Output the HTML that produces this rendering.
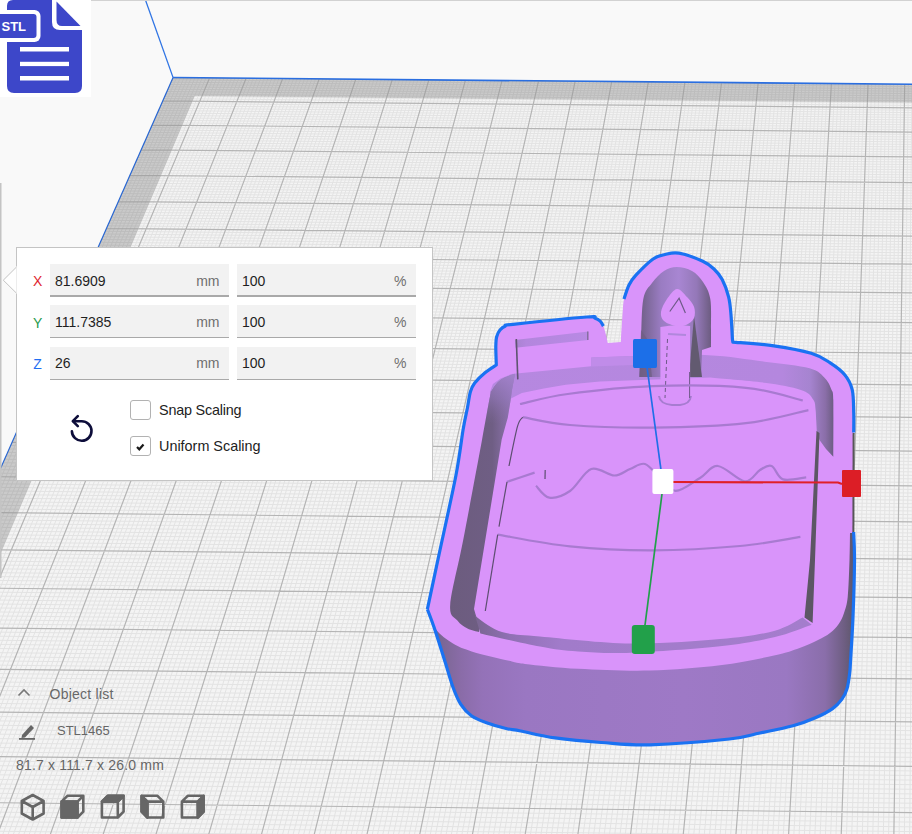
<!DOCTYPE html>
<html><head><meta charset="utf-8">
<style>
html,body{margin:0;padding:0;}
body{width:912px;height:834px;overflow:hidden;position:relative;background:#f9f9f9;font-family:"Liberation Sans",sans-serif;}
svg.scene{position:absolute;left:0;top:0;}
.panel{position:absolute;left:16px;top:247px;width:417px;height:234px;background:#fff;border:1px solid #c4c4c4;box-sizing:border-box;}
.fld{position:absolute;height:33px;background:#f2f2f2;border-bottom:1px solid #a9a9a9;box-sizing:border-box;}
.fld.f{border-bottom:2px solid #a9a9a9;}
.fld .v{position:absolute;left:5px;top:8.5px;font-size:14px;color:#1f1f1f;}
.fld .u{position:absolute;right:9.5px;top:8.5px;font-size:14px;color:#6f6f6f;}
.lbl{position:absolute;font-size:14px;}
.cb{position:absolute;left:113px;width:20.5px;height:20px;border:1.2px solid #b2b2b2;border-radius:3px;box-sizing:border-box;background:#fff;}
.cbt{position:absolute;left:142px;font-size:14.4px;color:#222;}
.txt{position:absolute;color:#666;}
</style></head><body>
<svg class="scene" width="912" height="834" viewBox="0 0 912 834">
<defs><clipPath id="pc"><path d="M173.07,77.53 L1161.35,86.50 L1279.85,966.75 L-212.09,950.09 Z"/></clipPath></defs>
<path d="M173.07,77.53 L1161.35,86.50 L1279.85,966.75 L-212.09,950.09 Z" fill="#f4f4f4"/>
<defs><clipPath id="bc"><path d="M173.07,77.53 L1161.35,86.50 L1163.82,104.87 L194.55,96.03 L-168.04,950.58 L-212.09,950.09 Z"/></clipPath><clipPath id="lc"><path d="M194.55,96.03 L1163.82,104.87 L1279.85,966.75 L-168.04,950.58 Z"/></clipPath></defs>
<path d="M173.07,77.53 L1161.35,86.50 L1163.82,104.87 L194.55,96.03 L-168.04,950.58 L-212.09,950.09 Z" fill="#cacaca"/>
<g clip-path="url(#lc)"><path d="M176.72,77.57L-206.58,950.15M180.37,77.60L-201.08,950.21M184.03,77.63L-195.57,950.27M187.68,77.66L-190.06,950.33M191.33,77.70L-184.56,950.39M194.98,77.73L-179.05,950.46M198.63,77.76L-173.54,950.52M202.29,77.80L-168.04,950.58M205.94,77.83L-162.53,950.64M213.24,77.90L-151.51,950.76M216.90,77.93L-146.01,950.83M220.55,77.96L-140.50,950.89M224.20,78.00L-134.99,950.95M227.85,78.03L-129.48,951.01M231.51,78.06L-123.97,951.07M235.16,78.10L-118.47,951.13M238.81,78.13L-112.96,951.19M242.46,78.16L-107.45,951.26M249.77,78.23L-96.43,951.38M253.42,78.26L-90.92,951.44M257.08,78.29L-85.41,951.50M260.73,78.33L-79.90,951.56M264.38,78.36L-74.39,951.63M268.04,78.39L-68.88,951.69M271.69,78.43L-63.37,951.75M275.34,78.46L-57.86,951.81M279.00,78.49L-52.35,951.87M286.30,78.56L-41.33,951.99M289.96,78.59L-35.82,952.06M293.61,78.63L-30.31,952.12M297.26,78.66L-24.80,952.18M300.92,78.69L-19.29,952.24M304.57,78.73L-13.78,952.30M308.23,78.76L-8.27,952.36M311.88,78.79L-2.75,952.43M315.53,78.83L2.76,952.49M322.84,78.89L13.78,952.61M326.50,78.92L19.29,952.67M330.15,78.96L24.81,952.73M333.81,78.99L30.32,952.80M337.46,79.02L35.83,952.86M341.11,79.06L41.34,952.92M344.77,79.09L46.86,952.98M348.42,79.12L52.37,953.04M352.08,79.16L57.88,953.10M359.39,79.22L68.91,953.23M363.04,79.26L74.42,953.29M366.70,79.29L79.94,953.35M370.35,79.32L85.45,953.41M374.01,79.36L90.96,953.47M377.66,79.39L96.48,953.53M381.32,79.42L101.99,953.60M384.97,79.46L107.51,953.66M388.63,79.49L113.02,953.72M395.94,79.55L124.05,953.84M399.60,79.59L129.57,953.90M403.25,79.62L135.08,953.97M406.91,79.65L140.60,954.03M410.56,79.69L146.11,954.09M414.22,79.72L151.63,954.15M417.88,79.75L157.14,954.21M421.53,79.79L162.66,954.27M425.19,79.82L168.17,954.34M432.50,79.89L179.21,954.46M436.16,79.92L184.72,954.52M439.81,79.95L190.24,954.58M443.47,79.99L195.76,954.64M447.12,80.02L201.27,954.71M450.78,80.05L206.79,954.77M454.44,80.09L212.31,954.83M458.09,80.12L217.82,954.89M461.75,80.15L223.34,954.95M469.06,80.22L234.38,955.07M472.72,80.25L239.90,955.14M476.38,80.28L245.41,955.20M480.04,80.32L250.93,955.26M483.69,80.35L256.45,955.32M487.35,80.38L261.97,955.38M491.01,80.42L267.49,955.44M494.66,80.45L273.01,955.51M498.32,80.48L278.52,955.57M505.64,80.55L289.56,955.69M509.29,80.58L295.08,955.75M512.95,80.62L300.60,955.81M516.61,80.65L306.12,955.88M520.27,80.68L311.64,955.94M523.92,80.72L317.16,956.00M527.58,80.75L322.68,956.06M531.24,80.78L328.20,956.12M534.90,80.82L333.72,956.18M542.21,80.88L344.76,956.31M545.87,80.92L350.28,956.37M549.53,80.95L355.80,956.43M553.19,80.98L361.33,956.49M556.85,81.02L366.85,956.55M560.50,81.05L372.37,956.62M564.16,81.08L377.89,956.68M567.82,81.11L383.41,956.74M571.48,81.15L388.93,956.80M578.80,81.21L399.98,956.92M582.46,81.25L405.50,956.99M586.12,81.28L411.02,957.05M589.77,81.31L416.54,957.11M593.43,81.35L422.07,957.17M597.09,81.38L427.59,957.23M600.75,81.41L433.11,957.30M604.41,81.45L438.64,957.36M608.07,81.48L444.16,957.42M615.39,81.55L455.21,957.54M619.05,81.58L460.73,957.60M622.71,81.61L466.25,957.67M626.37,81.65L471.78,957.73M630.03,81.68L477.30,957.79M633.69,81.71L482.83,957.85M637.35,81.75L488.35,957.91M641.01,81.78L493.88,957.97M644.67,81.81L499.40,958.04M651.99,81.88L510.45,958.16M655.65,81.91L515.98,958.22M659.31,81.95L521.50,958.28M662.97,81.98L527.03,958.34M666.63,82.01L532.55,958.41M670.29,82.04L538.08,958.47M673.95,82.08L543.60,958.53M677.61,82.11L549.13,958.59M681.27,82.14L554.66,958.65M688.59,82.21L565.71,958.78M692.25,82.24L571.24,958.84M695.91,82.28L576.76,958.90M699.57,82.31L582.29,958.96M703.23,82.34L587.82,959.02M706.89,82.38L593.34,959.09M710.55,82.41L598.87,959.15M714.21,82.44L604.40,959.21M717.88,82.48L609.93,959.27M725.20,82.54L620.98,959.39M728.86,82.58L626.51,959.46M732.52,82.61L632.04,959.52M736.18,82.64L637.57,959.58M739.84,82.68L643.09,959.64M743.51,82.71L648.62,959.70M747.17,82.74L654.15,959.76M750.83,82.78L659.68,959.83M754.49,82.81L665.21,959.89M761.81,82.88L676.27,960.01M765.48,82.91L681.80,960.07M769.14,82.94L687.33,960.14M772.80,82.98L692.86,960.20M776.46,83.01L698.39,960.26M780.13,83.04L703.92,960.32M783.79,83.08L709.45,960.38M787.45,83.11L714.98,960.44M791.11,83.14L720.51,960.51M798.44,83.21L731.57,960.63M802.10,83.24L737.10,960.69M805.76,83.27L742.63,960.75M809.43,83.31L748.16,960.81M813.09,83.34L753.70,960.88M816.75,83.37L759.23,960.94M820.41,83.41L764.76,961.00M824.08,83.44L770.29,961.06M827.74,83.47L775.82,961.12M835.07,83.54L786.89,961.25M838.73,83.57L792.42,961.31M842.39,83.61L797.95,961.37M846.06,83.64L803.49,961.43M849.72,83.67L809.02,961.49M853.38,83.71L814.55,961.56M857.05,83.74L820.08,961.62M860.71,83.77L825.62,961.68M864.37,83.81L831.15,961.74M871.70,83.87L842.22,961.87M875.37,83.91L847.75,961.93M879.03,83.94L853.29,961.99M882.69,83.97L858.82,962.05M886.36,84.01L864.36,962.11M890.02,84.04L869.89,962.17M893.69,84.07L875.42,962.24M897.35,84.11L880.96,962.30M901.01,84.14L886.49,962.36M908.34,84.21L897.57,962.48M912.01,84.24L903.10,962.55M915.67,84.27L908.64,962.61M919.34,84.31L914.17,962.67M923.00,84.34L919.71,962.73M926.67,84.37L925.24,962.79M930.33,84.41L930.78,962.85M934.00,84.44L936.32,962.92M937.66,84.47L941.85,962.98M944.99,84.54L952.93,963.10M948.66,84.57L958.46,963.16M952.32,84.60L964.00,963.23M955.99,84.64L969.54,963.29M959.65,84.67L975.07,963.35M963.32,84.70L980.61,963.41M966.98,84.74L986.15,963.47M970.65,84.77L991.69,963.54M974.31,84.80L997.22,963.60M981.65,84.87L1008.30,963.72M985.31,84.90L1013.84,963.78M988.98,84.94L1019.38,963.84M992.64,84.97L1024.92,963.91M996.31,85.00L1030.45,963.97M999.98,85.04L1035.99,964.03M1003.64,85.07L1041.53,964.09M1007.31,85.10L1047.07,964.15M1010.97,85.14L1052.61,964.22M1018.31,85.20L1063.69,964.34M1021.97,85.24L1069.23,964.40M1025.64,85.27L1074.77,964.46M1029.31,85.30L1080.31,964.53M1032.97,85.34L1085.85,964.59M1036.64,85.37L1091.39,964.65M1040.31,85.40L1096.93,964.71M1043.97,85.44L1102.47,964.77M1047.64,85.47L1108.01,964.83M1054.97,85.54L1119.09,964.96M1058.64,85.57L1124.64,965.02M1062.31,85.60L1130.18,965.08M1065.98,85.64L1135.72,965.14M1069.64,85.67L1141.26,965.21M1073.31,85.70L1146.80,965.27M1076.98,85.74L1152.34,965.33M1080.65,85.77L1157.89,965.39M1084.31,85.80L1163.43,965.45M1091.65,85.87L1174.51,965.58M1095.32,85.90L1180.06,965.64M1098.98,85.94L1185.60,965.70M1102.65,85.97L1191.14,965.76M1106.32,86.00L1196.69,965.83M1109.99,86.04L1202.23,965.89M1113.66,86.07L1207.77,965.95M1117.32,86.10L1213.32,966.01M1120.99,86.14L1218.86,966.07M1128.33,86.20L1229.95,966.20M1132.00,86.24L1235.49,966.26M1135.67,86.27L1241.04,966.32M1139.33,86.30L1246.58,966.38M1143.00,86.34L1252.13,966.44M1146.67,86.37L1257.67,966.51M1150.34,86.40L1263.21,966.57M1154.01,86.44L1268.76,966.63M1157.68,86.47L1274.31,966.69M172.05,79.85L1161.66,88.84M171.02,82.17L1161.98,91.18M170.00,84.50L1162.29,93.52M168.97,86.83L1162.61,95.87M167.93,89.17L1162.93,98.23M166.90,91.52L1163.24,100.60M165.86,93.87L1163.56,102.97M164.82,96.23L1163.88,105.35M163.77,98.60L1164.20,107.73M161.67,103.35L1164.85,112.52M160.62,105.74L1165.17,114.93M159.56,108.13L1165.50,117.34M158.50,110.53L1165.82,119.75M157.44,112.94L1166.15,122.18M156.38,115.35L1166.48,124.61M155.31,117.77L1166.80,127.05M154.24,120.20L1167.13,129.49M153.17,122.63L1167.46,131.94M151.01,127.51L1168.13,136.87M149.93,129.97L1168.46,139.34M148.84,132.43L1168.79,141.82M147.75,134.89L1169.13,144.30M146.66,137.37L1169.46,146.80M145.56,139.85L1169.80,149.30M144.47,142.33L1170.14,151.80M143.37,144.83L1170.48,154.32M142.26,147.33L1170.82,156.84M140.04,152.35L1171.50,161.90M138.93,154.88L1171.84,164.44M137.81,157.41L1172.18,166.99M136.69,159.94L1172.53,169.55M135.57,162.49L1172.87,172.11M134.44,165.04L1173.22,174.68M133.32,167.60L1173.56,177.26M132.18,170.16L1173.91,179.85M131.05,172.73L1174.26,182.44M128.77,177.90L1174.96,187.65M127.62,180.50L1175.32,190.27M126.47,183.10L1175.67,192.89M125.32,185.71L1176.02,195.52M124.16,188.33L1176.38,198.16M123.01,190.95L1176.73,200.80M121.84,193.59L1177.09,203.46M120.68,196.23L1177.45,206.12M119.51,198.87L1177.81,208.79M117.16,204.19L1178.53,214.15M115.98,206.86L1178.89,216.84M114.80,209.54L1179.26,219.54M113.61,212.23L1179.62,222.25M112.42,214.92L1179.99,224.97M111.23,217.63L1180.35,227.69M110.04,220.34L1180.72,230.42M108.84,223.05L1181.09,233.16M107.63,225.78L1181.46,235.91M105.21,231.26L1182.20,241.43M104.00,234.01L1182.58,244.20M102.78,236.77L1182.95,246.98M101.56,239.53L1183.33,249.77M100.34,242.31L1183.70,252.57M99.11,245.09L1184.08,255.37M97.88,247.88L1184.46,258.19M96.64,250.68L1184.84,261.01M95.40,253.49L1185.22,263.84M92.91,259.13L1185.99,269.53M91.66,261.96L1186.37,272.38M90.41,264.80L1186.76,275.25M89.15,267.65L1187.14,278.12M87.89,270.51L1187.53,281.00M86.62,273.38L1187.92,283.89M85.35,276.25L1188.31,286.79M84.08,279.14L1188.70,289.70M82.80,282.03L1189.09,292.62M80.24,287.84L1189.88,298.48M78.95,290.76L1190.28,301.42M77.65,293.69L1190.68,304.37M76.36,296.63L1191.08,307.33M75.06,299.58L1191.48,310.30M73.75,302.53L1191.88,313.28M72.44,305.50L1192.28,316.27M71.13,308.47L1192.68,319.27M69.82,311.45L1193.09,322.28M67.17,317.44L1193.90,328.32M65.84,320.45L1194.31,331.35M64.51,323.47L1194.72,334.40M63.17,326.50L1195.13,337.45M61.83,329.54L1195.54,340.52M60.49,332.59L1195.96,343.59M59.14,335.65L1196.37,346.67M57.78,338.71L1196.79,349.76M56.42,341.79L1197.21,352.87M53.70,347.97L1198.04,359.10M52.33,351.07L1198.47,362.23M50.95,354.19L1198.89,365.37M49.57,357.31L1199.31,368.52M48.19,360.45L1199.74,371.68M46.80,363.59L1200.17,374.85M45.41,366.75L1200.59,378.03M44.01,369.91L1201.02,381.22M42.61,373.08L1201.45,384.42M39.79,379.46L1202.32,390.86M38.38,382.67L1202.76,394.09M36.96,385.88L1203.19,397.33M35.54,389.11L1203.63,400.58M34.11,392.34L1204.07,403.85M32.68,395.59L1204.51,407.12M31.24,398.84L1204.95,410.40M29.80,402.11L1205.39,413.70M28.35,405.39L1205.84,417.00M25.44,411.97L1206.73,423.64M23.98,415.28L1207.18,426.98M22.52,418.60L1207.63,430.33M21.05,421.93L1208.09,433.69M19.57,425.27L1208.54,437.06M18.09,428.62L1208.99,440.44M16.61,431.99L1209.45,443.83M15.12,435.36L1209.91,447.23M13.63,438.75L1210.37,450.65M10.62,445.55L1211.29,457.51M9.11,448.97L1211.76,460.95M7.60,452.40L1212.22,464.41M6.08,455.84L1212.69,467.88M4.56,459.29L1213.16,471.37M3.03,462.75L1213.63,474.86M1.49,466.23L1214.10,478.37M-0.04,469.71L1214.57,481.88M-1.59,473.21L1215.05,485.41M-4.69,480.24L1216.00,492.50M-6.25,483.78L1216.48,496.07M-7.82,487.32L1216.97,499.64M-9.39,490.88L1217.45,503.23M-10.96,494.45L1217.93,506.83M-12.54,498.03L1218.42,510.44M-14.13,501.62L1218.91,514.07M-15.72,505.23L1219.40,517.71M-17.32,508.84L1219.89,521.35M-20.53,516.12L1220.88,528.69M-22.14,519.77L1221.37,532.38M-23.76,523.44L1221.87,536.08M-25.38,527.12L1222.37,539.79M-27.01,530.81L1222.87,543.51M-28.65,534.51L1223.37,547.25M-30.29,538.23L1223.88,551.00M-31.93,541.96L1224.39,554.76M-33.59,545.70L1224.89,558.54M-36.91,553.22L1225.92,566.13M-38.58,557.01L1226.43,569.94M-40.25,560.80L1226.95,573.77M-41.93,564.61L1227.46,577.61M-43.62,568.43L1227.98,581.47M-45.31,572.26L1228.50,585.34M-47.01,576.11L1229.02,589.22M-48.71,579.97L1229.55,593.11M-50.42,583.85L1230.08,597.02M-53.86,591.63L1231.13,604.88M-55.59,595.55L1231.67,608.83M-57.33,599.48L1232.20,612.80M-59.07,603.42L1232.73,616.78M-60.81,607.38L1233.27,620.77M-62.56,611.35L1233.81,624.78M-64.32,615.33L1234.35,628.80M-66.09,619.33L1234.90,632.83M-67.86,623.35L1235.44,636.88M-71.42,631.42L1236.54,645.03M-73.21,635.47L1237.09,649.12M-75.01,639.54L1237.64,653.23M-76.81,643.63L1238.20,657.35M-78.62,647.73L1238.75,661.49M-80.44,651.85L1239.31,665.64M-82.26,655.98L1239.87,669.81M-84.09,660.12L1240.44,674.00M-85.93,664.28L1241.00,678.19M-89.62,672.65L1242.14,686.64M-91.48,676.85L1242.71,690.88M-93.34,681.07L1243.28,695.14M-95.21,685.31L1243.86,699.42M-97.09,689.56L1244.44,703.71M-98.97,693.83L1245.02,708.02M-100.86,698.11L1245.60,712.34M-102.76,702.41L1246.18,716.68M-104.67,706.73L1246.77,721.03M-108.50,715.40L1247.95,729.79M-110.42,719.77L1248.54,734.20M-112.35,724.15L1249.14,738.62M-114.29,728.54L1249.73,743.05M-116.24,732.95L1250.33,747.51M-118.20,737.38L1250.94,751.98M-120.16,741.83L1251.54,756.46M-122.13,746.29L1252.15,760.97M-124.11,750.77L1252.75,765.49M-128.08,759.77L1253.98,774.58M-130.08,764.30L1254.59,779.15M-132.09,768.85L1255.21,783.74M-134.10,773.41L1255.83,788.35M-136.12,777.99L1256.46,792.97M-138.15,782.59L1257.08,797.62M-140.19,787.21L1257.71,802.28M-142.24,791.84L1258.34,806.96M-144.29,796.49L1258.97,811.65M-148.42,805.85L1260.24,821.10M-150.50,810.56L1260.88,825.85M-152.58,815.28L1261.52,830.62M-154.68,820.02L1262.17,835.41M-156.78,824.78L1262.81,840.21M-158.89,829.56L1263.46,845.04M-161.00,834.36L1264.12,849.88M-163.13,839.17L1264.77,854.74M-165.26,844.01L1265.43,859.63M-169.56,853.73L1266.75,869.45M-171.72,858.63L1267.42,874.39M-173.88,863.54L1268.08,879.35M-176.06,868.47L1268.75,884.32M-178.25,873.42L1269.43,889.32M-180.44,878.39L1270.10,894.34M-182.64,883.38L1270.78,899.38M-184.85,888.39L1271.46,904.44M-187.07,893.41L1272.14,909.52M-191.54,903.53L1273.52,919.74M-193.79,908.62L1274.21,924.88M-196.04,913.73L1274.91,930.04M-198.31,918.86L1275.61,935.22M-200.58,924.02L1276.31,940.42M-202.86,929.19L1277.01,945.65M-205.16,934.38L1277.71,950.89M-207.46,939.59L1278.42,956.16M-209.77,944.83L1279.14,961.45" stroke="#e3e3e3" stroke-width="1" fill="none"/></g>
<g clip-path="url(#bc)"><path d="M176.72,77.57L-206.58,950.15M180.37,77.60L-201.08,950.21M184.03,77.63L-195.57,950.27M187.68,77.66L-190.06,950.33M191.33,77.70L-184.56,950.39M194.98,77.73L-179.05,950.46M198.63,77.76L-173.54,950.52M202.29,77.80L-168.04,950.58M205.94,77.83L-162.53,950.64M213.24,77.90L-151.51,950.76M216.90,77.93L-146.01,950.83M220.55,77.96L-140.50,950.89M224.20,78.00L-134.99,950.95M227.85,78.03L-129.48,951.01M231.51,78.06L-123.97,951.07M235.16,78.10L-118.47,951.13M238.81,78.13L-112.96,951.19M242.46,78.16L-107.45,951.26M249.77,78.23L-96.43,951.38M253.42,78.26L-90.92,951.44M257.08,78.29L-85.41,951.50M260.73,78.33L-79.90,951.56M264.38,78.36L-74.39,951.63M268.04,78.39L-68.88,951.69M271.69,78.43L-63.37,951.75M275.34,78.46L-57.86,951.81M279.00,78.49L-52.35,951.87M286.30,78.56L-41.33,951.99M289.96,78.59L-35.82,952.06M293.61,78.63L-30.31,952.12M297.26,78.66L-24.80,952.18M300.92,78.69L-19.29,952.24M304.57,78.73L-13.78,952.30M308.23,78.76L-8.27,952.36M311.88,78.79L-2.75,952.43M315.53,78.83L2.76,952.49M322.84,78.89L13.78,952.61M326.50,78.92L19.29,952.67M330.15,78.96L24.81,952.73M333.81,78.99L30.32,952.80M337.46,79.02L35.83,952.86M341.11,79.06L41.34,952.92M344.77,79.09L46.86,952.98M348.42,79.12L52.37,953.04M352.08,79.16L57.88,953.10M359.39,79.22L68.91,953.23M363.04,79.26L74.42,953.29M366.70,79.29L79.94,953.35M370.35,79.32L85.45,953.41M374.01,79.36L90.96,953.47M377.66,79.39L96.48,953.53M381.32,79.42L101.99,953.60M384.97,79.46L107.51,953.66M388.63,79.49L113.02,953.72M395.94,79.55L124.05,953.84M399.60,79.59L129.57,953.90M403.25,79.62L135.08,953.97M406.91,79.65L140.60,954.03M410.56,79.69L146.11,954.09M414.22,79.72L151.63,954.15M417.88,79.75L157.14,954.21M421.53,79.79L162.66,954.27M425.19,79.82L168.17,954.34M432.50,79.89L179.21,954.46M436.16,79.92L184.72,954.52M439.81,79.95L190.24,954.58M443.47,79.99L195.76,954.64M447.12,80.02L201.27,954.71M450.78,80.05L206.79,954.77M454.44,80.09L212.31,954.83M458.09,80.12L217.82,954.89M461.75,80.15L223.34,954.95M469.06,80.22L234.38,955.07M472.72,80.25L239.90,955.14M476.38,80.28L245.41,955.20M480.04,80.32L250.93,955.26M483.69,80.35L256.45,955.32M487.35,80.38L261.97,955.38M491.01,80.42L267.49,955.44M494.66,80.45L273.01,955.51M498.32,80.48L278.52,955.57M505.64,80.55L289.56,955.69M509.29,80.58L295.08,955.75M512.95,80.62L300.60,955.81M516.61,80.65L306.12,955.88M520.27,80.68L311.64,955.94M523.92,80.72L317.16,956.00M527.58,80.75L322.68,956.06M531.24,80.78L328.20,956.12M534.90,80.82L333.72,956.18M542.21,80.88L344.76,956.31M545.87,80.92L350.28,956.37M549.53,80.95L355.80,956.43M553.19,80.98L361.33,956.49M556.85,81.02L366.85,956.55M560.50,81.05L372.37,956.62M564.16,81.08L377.89,956.68M567.82,81.11L383.41,956.74M571.48,81.15L388.93,956.80M578.80,81.21L399.98,956.92M582.46,81.25L405.50,956.99M586.12,81.28L411.02,957.05M589.77,81.31L416.54,957.11M593.43,81.35L422.07,957.17M597.09,81.38L427.59,957.23M600.75,81.41L433.11,957.30M604.41,81.45L438.64,957.36M608.07,81.48L444.16,957.42M615.39,81.55L455.21,957.54M619.05,81.58L460.73,957.60M622.71,81.61L466.25,957.67M626.37,81.65L471.78,957.73M630.03,81.68L477.30,957.79M633.69,81.71L482.83,957.85M637.35,81.75L488.35,957.91M641.01,81.78L493.88,957.97M644.67,81.81L499.40,958.04M651.99,81.88L510.45,958.16M655.65,81.91L515.98,958.22M659.31,81.95L521.50,958.28M662.97,81.98L527.03,958.34M666.63,82.01L532.55,958.41M670.29,82.04L538.08,958.47M673.95,82.08L543.60,958.53M677.61,82.11L549.13,958.59M681.27,82.14L554.66,958.65M688.59,82.21L565.71,958.78M692.25,82.24L571.24,958.84M695.91,82.28L576.76,958.90M699.57,82.31L582.29,958.96M703.23,82.34L587.82,959.02M706.89,82.38L593.34,959.09M710.55,82.41L598.87,959.15M714.21,82.44L604.40,959.21M717.88,82.48L609.93,959.27M725.20,82.54L620.98,959.39M728.86,82.58L626.51,959.46M732.52,82.61L632.04,959.52M736.18,82.64L637.57,959.58M739.84,82.68L643.09,959.64M743.51,82.71L648.62,959.70M747.17,82.74L654.15,959.76M750.83,82.78L659.68,959.83M754.49,82.81L665.21,959.89M761.81,82.88L676.27,960.01M765.48,82.91L681.80,960.07M769.14,82.94L687.33,960.14M772.80,82.98L692.86,960.20M776.46,83.01L698.39,960.26M780.13,83.04L703.92,960.32M783.79,83.08L709.45,960.38M787.45,83.11L714.98,960.44M791.11,83.14L720.51,960.51M798.44,83.21L731.57,960.63M802.10,83.24L737.10,960.69M805.76,83.27L742.63,960.75M809.43,83.31L748.16,960.81M813.09,83.34L753.70,960.88M816.75,83.37L759.23,960.94M820.41,83.41L764.76,961.00M824.08,83.44L770.29,961.06M827.74,83.47L775.82,961.12M835.07,83.54L786.89,961.25M838.73,83.57L792.42,961.31M842.39,83.61L797.95,961.37M846.06,83.64L803.49,961.43M849.72,83.67L809.02,961.49M853.38,83.71L814.55,961.56M857.05,83.74L820.08,961.62M860.71,83.77L825.62,961.68M864.37,83.81L831.15,961.74M871.70,83.87L842.22,961.87M875.37,83.91L847.75,961.93M879.03,83.94L853.29,961.99M882.69,83.97L858.82,962.05M886.36,84.01L864.36,962.11M890.02,84.04L869.89,962.17M893.69,84.07L875.42,962.24M897.35,84.11L880.96,962.30M901.01,84.14L886.49,962.36M908.34,84.21L897.57,962.48M912.01,84.24L903.10,962.55M915.67,84.27L908.64,962.61M919.34,84.31L914.17,962.67M923.00,84.34L919.71,962.73M926.67,84.37L925.24,962.79M930.33,84.41L930.78,962.85M934.00,84.44L936.32,962.92M937.66,84.47L941.85,962.98M944.99,84.54L952.93,963.10M948.66,84.57L958.46,963.16M952.32,84.60L964.00,963.23M955.99,84.64L969.54,963.29M959.65,84.67L975.07,963.35M963.32,84.70L980.61,963.41M966.98,84.74L986.15,963.47M970.65,84.77L991.69,963.54M974.31,84.80L997.22,963.60M981.65,84.87L1008.30,963.72M985.31,84.90L1013.84,963.78M988.98,84.94L1019.38,963.84M992.64,84.97L1024.92,963.91M996.31,85.00L1030.45,963.97M999.98,85.04L1035.99,964.03M1003.64,85.07L1041.53,964.09M1007.31,85.10L1047.07,964.15M1010.97,85.14L1052.61,964.22M1018.31,85.20L1063.69,964.34M1021.97,85.24L1069.23,964.40M1025.64,85.27L1074.77,964.46M1029.31,85.30L1080.31,964.53M1032.97,85.34L1085.85,964.59M1036.64,85.37L1091.39,964.65M1040.31,85.40L1096.93,964.71M1043.97,85.44L1102.47,964.77M1047.64,85.47L1108.01,964.83M1054.97,85.54L1119.09,964.96M1058.64,85.57L1124.64,965.02M1062.31,85.60L1130.18,965.08M1065.98,85.64L1135.72,965.14M1069.64,85.67L1141.26,965.21M1073.31,85.70L1146.80,965.27M1076.98,85.74L1152.34,965.33M1080.65,85.77L1157.89,965.39M1084.31,85.80L1163.43,965.45M1091.65,85.87L1174.51,965.58M1095.32,85.90L1180.06,965.64M1098.98,85.94L1185.60,965.70M1102.65,85.97L1191.14,965.76M1106.32,86.00L1196.69,965.83M1109.99,86.04L1202.23,965.89M1113.66,86.07L1207.77,965.95M1117.32,86.10L1213.32,966.01M1120.99,86.14L1218.86,966.07M1128.33,86.20L1229.95,966.20M1132.00,86.24L1235.49,966.26M1135.67,86.27L1241.04,966.32M1139.33,86.30L1246.58,966.38M1143.00,86.34L1252.13,966.44M1146.67,86.37L1257.67,966.51M1150.34,86.40L1263.21,966.57M1154.01,86.44L1268.76,966.63M1157.68,86.47L1274.31,966.69M172.05,79.85L1161.66,88.84M171.02,82.17L1161.98,91.18M170.00,84.50L1162.29,93.52M168.97,86.83L1162.61,95.87M167.93,89.17L1162.93,98.23M166.90,91.52L1163.24,100.60M165.86,93.87L1163.56,102.97M164.82,96.23L1163.88,105.35M163.77,98.60L1164.20,107.73M161.67,103.35L1164.85,112.52M160.62,105.74L1165.17,114.93M159.56,108.13L1165.50,117.34M158.50,110.53L1165.82,119.75M157.44,112.94L1166.15,122.18M156.38,115.35L1166.48,124.61M155.31,117.77L1166.80,127.05M154.24,120.20L1167.13,129.49M153.17,122.63L1167.46,131.94M151.01,127.51L1168.13,136.87M149.93,129.97L1168.46,139.34M148.84,132.43L1168.79,141.82M147.75,134.89L1169.13,144.30M146.66,137.37L1169.46,146.80M145.56,139.85L1169.80,149.30M144.47,142.33L1170.14,151.80M143.37,144.83L1170.48,154.32M142.26,147.33L1170.82,156.84M140.04,152.35L1171.50,161.90M138.93,154.88L1171.84,164.44M137.81,157.41L1172.18,166.99M136.69,159.94L1172.53,169.55M135.57,162.49L1172.87,172.11M134.44,165.04L1173.22,174.68M133.32,167.60L1173.56,177.26M132.18,170.16L1173.91,179.85M131.05,172.73L1174.26,182.44M128.77,177.90L1174.96,187.65M127.62,180.50L1175.32,190.27M126.47,183.10L1175.67,192.89M125.32,185.71L1176.02,195.52M124.16,188.33L1176.38,198.16M123.01,190.95L1176.73,200.80M121.84,193.59L1177.09,203.46M120.68,196.23L1177.45,206.12M119.51,198.87L1177.81,208.79M117.16,204.19L1178.53,214.15M115.98,206.86L1178.89,216.84M114.80,209.54L1179.26,219.54M113.61,212.23L1179.62,222.25M112.42,214.92L1179.99,224.97M111.23,217.63L1180.35,227.69M110.04,220.34L1180.72,230.42M108.84,223.05L1181.09,233.16M107.63,225.78L1181.46,235.91M105.21,231.26L1182.20,241.43M104.00,234.01L1182.58,244.20M102.78,236.77L1182.95,246.98M101.56,239.53L1183.33,249.77M100.34,242.31L1183.70,252.57M99.11,245.09L1184.08,255.37M97.88,247.88L1184.46,258.19M96.64,250.68L1184.84,261.01M95.40,253.49L1185.22,263.84M92.91,259.13L1185.99,269.53M91.66,261.96L1186.37,272.38M90.41,264.80L1186.76,275.25M89.15,267.65L1187.14,278.12M87.89,270.51L1187.53,281.00M86.62,273.38L1187.92,283.89M85.35,276.25L1188.31,286.79M84.08,279.14L1188.70,289.70M82.80,282.03L1189.09,292.62M80.24,287.84L1189.88,298.48M78.95,290.76L1190.28,301.42M77.65,293.69L1190.68,304.37M76.36,296.63L1191.08,307.33M75.06,299.58L1191.48,310.30M73.75,302.53L1191.88,313.28M72.44,305.50L1192.28,316.27M71.13,308.47L1192.68,319.27M69.82,311.45L1193.09,322.28M67.17,317.44L1193.90,328.32M65.84,320.45L1194.31,331.35M64.51,323.47L1194.72,334.40M63.17,326.50L1195.13,337.45M61.83,329.54L1195.54,340.52M60.49,332.59L1195.96,343.59M59.14,335.65L1196.37,346.67M57.78,338.71L1196.79,349.76M56.42,341.79L1197.21,352.87M53.70,347.97L1198.04,359.10M52.33,351.07L1198.47,362.23M50.95,354.19L1198.89,365.37M49.57,357.31L1199.31,368.52M48.19,360.45L1199.74,371.68M46.80,363.59L1200.17,374.85M45.41,366.75L1200.59,378.03M44.01,369.91L1201.02,381.22M42.61,373.08L1201.45,384.42M39.79,379.46L1202.32,390.86M38.38,382.67L1202.76,394.09M36.96,385.88L1203.19,397.33M35.54,389.11L1203.63,400.58M34.11,392.34L1204.07,403.85M32.68,395.59L1204.51,407.12M31.24,398.84L1204.95,410.40M29.80,402.11L1205.39,413.70M28.35,405.39L1205.84,417.00M25.44,411.97L1206.73,423.64M23.98,415.28L1207.18,426.98M22.52,418.60L1207.63,430.33M21.05,421.93L1208.09,433.69M19.57,425.27L1208.54,437.06M18.09,428.62L1208.99,440.44M16.61,431.99L1209.45,443.83M15.12,435.36L1209.91,447.23M13.63,438.75L1210.37,450.65M10.62,445.55L1211.29,457.51M9.11,448.97L1211.76,460.95M7.60,452.40L1212.22,464.41M6.08,455.84L1212.69,467.88M4.56,459.29L1213.16,471.37M3.03,462.75L1213.63,474.86M1.49,466.23L1214.10,478.37M-0.04,469.71L1214.57,481.88M-1.59,473.21L1215.05,485.41M-4.69,480.24L1216.00,492.50M-6.25,483.78L1216.48,496.07M-7.82,487.32L1216.97,499.64M-9.39,490.88L1217.45,503.23M-10.96,494.45L1217.93,506.83M-12.54,498.03L1218.42,510.44M-14.13,501.62L1218.91,514.07M-15.72,505.23L1219.40,517.71M-17.32,508.84L1219.89,521.35M-20.53,516.12L1220.88,528.69M-22.14,519.77L1221.37,532.38M-23.76,523.44L1221.87,536.08M-25.38,527.12L1222.37,539.79M-27.01,530.81L1222.87,543.51M-28.65,534.51L1223.37,547.25M-30.29,538.23L1223.88,551.00M-31.93,541.96L1224.39,554.76M-33.59,545.70L1224.89,558.54M-36.91,553.22L1225.92,566.13M-38.58,557.01L1226.43,569.94M-40.25,560.80L1226.95,573.77M-41.93,564.61L1227.46,577.61M-43.62,568.43L1227.98,581.47M-45.31,572.26L1228.50,585.34M-47.01,576.11L1229.02,589.22M-48.71,579.97L1229.55,593.11M-50.42,583.85L1230.08,597.02M-53.86,591.63L1231.13,604.88M-55.59,595.55L1231.67,608.83M-57.33,599.48L1232.20,612.80M-59.07,603.42L1232.73,616.78M-60.81,607.38L1233.27,620.77M-62.56,611.35L1233.81,624.78M-64.32,615.33L1234.35,628.80M-66.09,619.33L1234.90,632.83M-67.86,623.35L1235.44,636.88M-71.42,631.42L1236.54,645.03M-73.21,635.47L1237.09,649.12M-75.01,639.54L1237.64,653.23M-76.81,643.63L1238.20,657.35M-78.62,647.73L1238.75,661.49M-80.44,651.85L1239.31,665.64M-82.26,655.98L1239.87,669.81M-84.09,660.12L1240.44,674.00M-85.93,664.28L1241.00,678.19M-89.62,672.65L1242.14,686.64M-91.48,676.85L1242.71,690.88M-93.34,681.07L1243.28,695.14M-95.21,685.31L1243.86,699.42M-97.09,689.56L1244.44,703.71M-98.97,693.83L1245.02,708.02M-100.86,698.11L1245.60,712.34M-102.76,702.41L1246.18,716.68M-104.67,706.73L1246.77,721.03M-108.50,715.40L1247.95,729.79M-110.42,719.77L1248.54,734.20M-112.35,724.15L1249.14,738.62M-114.29,728.54L1249.73,743.05M-116.24,732.95L1250.33,747.51M-118.20,737.38L1250.94,751.98M-120.16,741.83L1251.54,756.46M-122.13,746.29L1252.15,760.97M-124.11,750.77L1252.75,765.49M-128.08,759.77L1253.98,774.58M-130.08,764.30L1254.59,779.15M-132.09,768.85L1255.21,783.74M-134.10,773.41L1255.83,788.35M-136.12,777.99L1256.46,792.97M-138.15,782.59L1257.08,797.62M-140.19,787.21L1257.71,802.28M-142.24,791.84L1258.34,806.96M-144.29,796.49L1258.97,811.65M-148.42,805.85L1260.24,821.10M-150.50,810.56L1260.88,825.85M-152.58,815.28L1261.52,830.62M-154.68,820.02L1262.17,835.41M-156.78,824.78L1262.81,840.21M-158.89,829.56L1263.46,845.04M-161.00,834.36L1264.12,849.88M-163.13,839.17L1264.77,854.74M-165.26,844.01L1265.43,859.63M-169.56,853.73L1266.75,869.45M-171.72,858.63L1267.42,874.39M-173.88,863.54L1268.08,879.35M-176.06,868.47L1268.75,884.32M-178.25,873.42L1269.43,889.32M-180.44,878.39L1270.10,894.34M-182.64,883.38L1270.78,899.38M-184.85,888.39L1271.46,904.44M-187.07,893.41L1272.14,909.52M-191.54,903.53L1273.52,919.74M-193.79,908.62L1274.21,924.88M-196.04,913.73L1274.91,930.04M-198.31,918.86L1275.61,935.22M-200.58,924.02L1276.31,940.42M-202.86,929.19L1277.01,945.65M-205.16,934.38L1277.71,950.89M-207.46,939.59L1278.42,956.16M-209.77,944.83L1279.14,961.45" stroke="#bdbdbd" stroke-width="1" fill="none"/></g>
<g clip-path="url(#lc)"><path d="M173.07,77.53L-212.09,950.09M209.59,77.86L-157.02,950.70M246.12,78.20L-101.94,951.32M282.65,78.53L-46.84,951.93M319.19,78.86L8.27,952.55M355.73,79.19L63.39,953.16M392.29,79.52L118.54,953.78M428.84,79.85L173.69,954.40M465.41,80.19L228.86,955.01M501.98,80.52L284.04,955.63M538.56,80.85L339.24,956.25M575.14,81.18L394.46,956.86M611.73,81.51L449.68,957.48M648.33,81.85L504.93,958.10M684.93,82.18L560.18,958.71M721.54,82.51L615.45,959.33M758.15,82.84L670.74,959.95M794.77,83.17L726.04,960.57M831.40,83.51L781.36,961.19M868.04,83.84L836.69,961.80M904.68,84.17L892.03,962.42M941.33,84.51L947.39,963.04M977.98,84.84L1002.76,963.66M1014.64,85.17L1058.15,964.28M1051.31,85.50L1113.55,964.90M1087.98,85.84L1168.97,965.52M1124.66,86.17L1224.40,966.14M1161.35,86.50L1279.85,966.75M173.07,77.53L1161.35,86.50M162.72,100.97L1164.53,110.12M152.09,125.07L1167.79,134.40M141.15,149.84L1171.16,159.37M129.91,175.32L1174.61,185.04M118.34,201.53L1178.17,211.46M106.43,228.51L1181.83,238.66M94.16,256.30L1185.60,266.68M81.52,284.93L1189.49,295.54M68.49,314.44L1193.49,325.29M55.06,344.87L1197.62,355.98M41.20,376.27L1201.89,387.64M26.90,408.67L1206.29,420.32M12.13,442.14L1210.83,454.07M-3.14,476.72L1215.53,488.95M-18.92,512.47L1220.38,525.02M-35.24,549.46L1225.40,562.33M-52.14,587.73L1230.60,600.95M-69.64,627.38L1235.99,640.95M-87.77,668.46L1241.57,682.41M-106.58,711.06L1247.36,725.40M-126.09,755.26L1253.37,770.03M-146.35,801.16L1259.60,816.37M-167.41,848.86L1266.09,864.53M-189.30,898.46L1272.83,914.62M-212.09,950.09L1279.85,966.75" stroke="#b4b4b4" stroke-width="1.2" fill="none"/></g>
<g clip-path="url(#bc)"><path d="M173.07,77.53L-212.09,950.09M209.59,77.86L-157.02,950.70M246.12,78.20L-101.94,951.32M282.65,78.53L-46.84,951.93M319.19,78.86L8.27,952.55M355.73,79.19L63.39,953.16M392.29,79.52L118.54,953.78M428.84,79.85L173.69,954.40M465.41,80.19L228.86,955.01M501.98,80.52L284.04,955.63M538.56,80.85L339.24,956.25M575.14,81.18L394.46,956.86M611.73,81.51L449.68,957.48M648.33,81.85L504.93,958.10M684.93,82.18L560.18,958.71M721.54,82.51L615.45,959.33M758.15,82.84L670.74,959.95M794.77,83.17L726.04,960.57M831.40,83.51L781.36,961.19M868.04,83.84L836.69,961.80M904.68,84.17L892.03,962.42M941.33,84.51L947.39,963.04M977.98,84.84L1002.76,963.66M1014.64,85.17L1058.15,964.28M1051.31,85.50L1113.55,964.90M1087.98,85.84L1168.97,965.52M1124.66,86.17L1224.40,966.14M1161.35,86.50L1279.85,966.75M173.07,77.53L1161.35,86.50M162.72,100.97L1164.53,110.12M152.09,125.07L1167.79,134.40M141.15,149.84L1171.16,159.37M129.91,175.32L1174.61,185.04M118.34,201.53L1178.17,211.46M106.43,228.51L1181.83,238.66M94.16,256.30L1185.60,266.68M81.52,284.93L1189.49,295.54M68.49,314.44L1193.49,325.29M55.06,344.87L1197.62,355.98M41.20,376.27L1201.89,387.64M26.90,408.67L1206.29,420.32M12.13,442.14L1210.83,454.07M-3.14,476.72L1215.53,488.95M-18.92,512.47L1220.38,525.02M-35.24,549.46L1225.40,562.33M-52.14,587.73L1230.60,600.95M-69.64,627.38L1235.99,640.95M-87.77,668.46L1241.57,682.41M-106.58,711.06L1247.36,725.40M-126.09,755.26L1253.37,770.03M-146.35,801.16L1259.60,816.37M-167.41,848.86L1266.09,864.53M-189.30,898.46L1272.83,914.62M-212.09,950.09L1279.85,966.75" stroke="#a6a6a6" stroke-width="1.2" fill="none"/></g>
<path d="M-212.09,950.09 L173.07,77.53" stroke="#2566d6" stroke-width="1.15" fill="none"/>
<path d="M173.07,77.53 L1161.35,86.50" stroke="#2a6ee0" stroke-width="1.6" fill="none"/>
<path d="M145.1,-1 L173.1,77.6" stroke="#2f74e4" stroke-width="1.3" fill="none"/>
<rect x="91" y="0" width="821" height="1" fill="#d2d2d2"/>
<rect x="0" y="183" width="1.5" height="395" fill="#c4c4c4"/>
<path d="M496.3,365.0 C496.2,362.0 495.8,351.7 495.8,347.0 C495.9,342.3 495.9,339.8 496.6,337.0 C497.3,334.2 498.5,331.8 500.0,330.0 C501.5,328.2 503.3,326.9 505.5,326.0 C507.7,325.1 499.4,325.8 513.0,324.3 C526.6,322.8 573.2,318.0 586.9,317.0 C600.6,316.0 592.8,317.5 595.0,318.2 C597.2,318.9 598.8,319.9 600.2,321.2 C601.6,322.5 602.5,324.0 603.4,326.2 C604.3,328.4 605.1,331.5 605.8,334.3 C606.5,337.1 607.5,341.6 607.8,343.0 L621.0,342.0 C621.0,341.3 620.8,342.5 621.0,338.0 C621.2,333.5 622.0,321.5 622.5,315.0 C623.0,308.5 622.9,304.0 624.0,299.0 C625.1,294.0 627.0,289.0 629.0,285.0 C631.0,281.0 631.9,279.5 635.9,275.2 C639.9,270.9 648.2,262.4 653.1,259.0 C658.0,255.6 660.7,255.5 665.0,254.5 C669.3,253.5 672.7,252.1 679.0,253.2 C685.3,254.3 697.0,258.6 702.8,261.2 C708.6,263.8 710.8,265.9 714.0,269.0 C717.2,272.1 719.8,274.9 722.2,279.5 C724.6,284.1 727.1,290.9 728.6,296.8 C730.1,302.7 730.4,307.8 731.0,315.0 C731.6,322.2 732.2,335.8 732.5,340.0 L732.9,342.1 C739.7,342.7 760.8,343.9 773.9,345.8 C787.0,347.7 801.9,350.5 811.2,353.3 C820.5,356.1 824.2,359.0 829.8,362.6 C835.4,366.2 841.0,370.2 844.7,374.7 C848.4,379.2 850.7,383.4 852.2,389.6 C853.7,395.8 853.5,404.9 853.7,412.0 C854.0,419.1 853.7,429.1 853.7,432.5 L853.7,432.5 L853.6,532.0 L853.6,532.0 C853.8,536.7 854.6,546.3 854.5,560.0 C854.4,573.7 853.8,597.3 853.1,614.0 C852.5,630.7 851.2,650.2 850.6,660.0 C850.0,669.8 850.3,668.2 849.7,673.0 C849.1,677.8 848.3,684.4 847.0,688.8 C845.7,693.2 844.2,696.1 841.8,699.4 C839.4,702.7 837.0,705.5 832.6,708.6 C828.2,711.7 822.0,714.9 815.4,717.8 C808.8,720.7 802.2,723.3 793.0,725.8 C783.8,728.3 770.6,730.8 760.0,733.0 C749.4,735.2 747.8,737.0 729.5,739.0 C711.2,741.0 671.4,744.2 650.0,744.8 C628.6,745.4 617.0,743.6 601.2,742.5 C585.4,741.4 568.5,739.8 555.1,737.9 C541.7,736.0 528.8,732.6 520.6,731.0 C512.4,729.4 511.6,729.8 506.0,728.5 C500.4,727.2 493.0,725.1 487.3,723.0 C481.6,720.9 476.1,719.1 471.7,716.0 C467.3,712.9 463.9,709.2 460.8,704.4 C457.7,699.6 455.6,694.2 453.0,687.2 C450.4,680.2 448.3,672.2 445.2,662.3 C442.1,652.4 437.3,636.9 434.3,628.0 C431.3,619.1 428.5,612.3 427.4,609.2 L427.4,609.2 C429.5,599.3 435.2,572.4 440.0,550.0 C444.8,527.6 452.1,495.2 456.0,475.0 C459.9,454.8 461.3,440.2 463.2,429.0 C465.1,417.8 466.3,413.7 467.5,407.5 C468.7,401.3 469.2,395.8 470.4,391.7 C471.6,387.6 472.3,386.1 474.7,383.0 C477.1,379.9 481.1,376.0 484.7,373.0 C488.3,370.0 494.4,366.3 496.3,365.0 Z" fill="#d994fa"/>
<defs><linearGradient id="sw" x1="427" y1="0" x2="855" y2="0" gradientUnits="userSpaceOnUse"><stop offset="0" stop-color="#6e5e82"/><stop offset="0.03" stop-color="#7a6692"/><stop offset="0.08" stop-color="#8a6ca8"/><stop offset="0.13" stop-color="#9472b8"/><stop offset="0.23" stop-color="#9a77c2"/><stop offset="0.6" stop-color="#9e79c6"/><stop offset="0.84" stop-color="#9a78c2"/><stop offset="0.93" stop-color="#8a6eaa"/><stop offset="0.975" stop-color="#6e5e82"/><stop offset="1" stop-color="#5c5668"/></linearGradient><linearGradient id="iw" x1="0" y1="0" x2="1" y2="0"><stop offset="0" stop-color="#6c5c7e"/><stop offset="0.65" stop-color="#6f5e84"/><stop offset="1" stop-color="#9478b8"/></linearGradient><linearGradient id="iwt" x1="0" y1="0" x2="0" y2="1"><stop offset="0" stop-color="#a684d0" stop-opacity="0.85"/><stop offset="0.15" stop-color="#9a7cc4" stop-opacity="0.5"/><stop offset="0.3" stop-color="#8a6eaa" stop-opacity="0"/></linearGradient><linearGradient id="rw" x1="0" y1="0" x2="1" y2="0"><stop offset="0" stop-color="#b28ada"/><stop offset="0.5" stop-color="#9a78c0"/><stop offset="1" stop-color="#7c6896"/></linearGradient><linearGradient id="bb" x1="477" y1="0" x2="812" y2="0" gradientUnits="userSpaceOnUse"><stop offset="0" stop-color="#7a6692"/><stop offset="0.1" stop-color="#9070b4"/><stop offset="0.25" stop-color="#a17bca"/><stop offset="1" stop-color="#a47dcc"/></linearGradient><linearGradient id="aw" x1="0" y1="0" x2="1" y2="0"><stop offset="0" stop-color="#6e5e84"/><stop offset="0.3" stop-color="#9a7cc2"/><stop offset="0.55" stop-color="#a886d2"/><stop offset="0.8" stop-color="#9478b8"/><stop offset="1" stop-color="#6c5c80"/></linearGradient></defs>
<path d="M427.4,609.2 C428.8,612.6 431.6,623.9 435.9,629.6 C440.2,635.3 447.0,640.0 453.0,643.6 C459.0,647.2 462.3,648.5 471.7,651.4 C481.1,654.3 500.2,658.7 509.1,660.8 C518.0,662.9 513.5,662.6 525.0,663.9 C536.5,665.2 557.4,667.7 578.2,668.8 C599.0,669.9 626.4,671.2 650.0,670.6 C673.6,670.0 699.3,667.8 720.0,665.3 C740.7,662.8 760.7,658.4 774.0,655.5 C787.3,652.6 792.3,650.6 799.6,648.0 C806.9,645.4 812.9,642.5 818.0,640.0 C823.1,637.5 826.5,635.7 830.0,633.0 C833.5,630.3 836.4,627.3 838.7,624.0 C841.0,620.7 842.5,617.5 844.0,613.0 C845.5,608.5 846.8,605.8 847.7,597.0 C848.6,588.2 849.1,570.7 849.5,560.0 C849.9,549.3 849.9,537.5 850.0,533.0 L853.6,533.0 L853.6,532.0 C853.8,536.7 854.6,546.3 854.5,560.0 C854.4,573.7 853.8,597.3 853.1,614.0 C852.5,630.7 851.2,650.2 850.6,660.0 C850.0,669.8 850.3,668.2 849.7,673.0 C849.1,677.8 848.3,684.4 847.0,688.8 C845.7,693.2 844.2,696.1 841.8,699.4 C839.4,702.7 837.0,705.5 832.6,708.6 C828.2,711.7 822.0,714.9 815.4,717.8 C808.8,720.7 802.2,723.3 793.0,725.8 C783.8,728.3 770.6,730.8 760.0,733.0 C749.4,735.2 747.8,737.0 729.5,739.0 C711.2,741.0 671.4,744.2 650.0,744.8 C628.6,745.4 617.0,743.6 601.2,742.5 C585.4,741.4 568.5,739.8 555.1,737.9 C541.7,736.0 528.8,732.6 520.6,731.0 C512.4,729.4 511.6,729.8 506.0,728.5 C500.4,727.2 493.0,725.1 487.3,723.0 C481.6,720.9 476.1,719.1 471.7,716.0 C467.3,712.9 463.9,709.2 460.8,704.4 C457.7,699.6 455.6,694.2 453.0,687.2 C450.4,680.2 448.3,672.2 445.2,662.3 C442.1,652.4 437.3,636.9 434.3,628.0 C431.3,619.1 428.5,612.3 427.4,609.2 Z" fill="url(#sw)"/>
<path d="M853.6,433 L853.4,533" stroke="#565656" stroke-width="2"/>
<defs><linearGradient id="bwg" x1="490" y1="0" x2="834" y2="0" gradientUnits="userSpaceOnUse"><stop offset="0" stop-color="#b688e0"/><stop offset="0.85" stop-color="#b487de"/><stop offset="0.93" stop-color="#a684d0"/><stop offset="0.975" stop-color="#8a6ea8"/><stop offset="1" stop-color="#6a5c80"/></linearGradient></defs>
<path d="M490.0,392.0 L492.9,384.1 L500.6,378.5 L511.4,374.1 L550.2,370.2 L591.2,366.3 L591.2,357.5 L591.2,357.5 C599.3,357.2 620.4,356.4 640.0,356.0 C659.6,355.6 687.8,354.2 708.6,355.2 C729.4,356.1 747.8,359.5 764.6,361.7 C781.4,363.9 799.5,365.4 809.6,368.3 C819.7,371.2 821.7,375.1 825.4,378.8 C829.1,382.5 830.9,388.7 832.0,390.7 L832.0,390.7 C832.2,392.2 833.1,389.0 833.3,400.0 C833.5,411.0 833.3,447.2 833.3,456.7 L826,449 L819.5,440 L816.8,432 L816.2,420 L816.2,420.0 C816.1,418.2 816.0,412.5 815.5,409.2 C815.0,405.9 815.6,403.1 813.5,400.0 C811.4,396.9 810.2,393.5 803.0,390.7 C795.8,387.9 785.4,385.6 770.0,383.4 C754.6,381.2 720.4,378.5 710.5,377.5 L600.0,381.4 L565.8,384.7 L543.9,388.5 L521.9,392.9 L511.0,398.4 L500.0,401.0 Z" fill="url(#bwg)"/>
<path d="M591.2,357.5 L640,356 L660,355.8 L660,364.5 L640,364.8 L591.2,366.5 Z" fill="#c08ce9"/>
<path d="M515.0,373.7 C512.6,374.8 504.4,377.2 500.6,380.0 C496.8,382.8 493.8,387.3 492.0,390.2 C490.2,393.1 491.5,389.0 489.8,397.4 C488.1,405.8 486.3,416.8 481.9,440.6 C477.5,464.4 468.5,512.6 463.2,540.0 C457.9,567.4 451.2,591.3 450.2,604.7 C449.2,618.1 454.5,616.6 457.4,620.6 C460.3,624.6 463.9,626.6 467.5,628.5 C471.1,630.4 477.1,631.5 479.0,632.1 L479.0,626.3 L474.0,609.0 L501.7,439.6 L507.8,417.6 L510.6,400.3 L512.0,390.0 Z" fill="url(#iw)"/>
<path d="M515.0,373.7 C512.6,374.8 504.4,377.2 500.6,380.0 C496.8,382.8 493.8,387.3 492.0,390.2 C490.2,393.1 491.5,389.0 489.8,397.4 C488.1,405.8 486.3,416.8 481.9,440.6 C477.5,464.4 466.3,523.4 463.2,540.0 L501.7,439.6 L507.8,417.6 L510.6,400.3 L512.0,390.0 Z" fill="url(#iwt)"/>
<path d="M474.0,612.0 C474.6,613.0 472.9,614.4 477.6,617.7 C482.3,621.0 491.6,628.9 502.0,632.0 C512.4,635.1 518.5,634.5 540.0,636.4 C561.5,638.3 601.0,643.0 631.0,643.5 C661.0,644.0 696.2,641.2 720.0,639.1 C743.8,637.0 760.2,634.6 774.0,631.0 C787.8,627.4 797.9,619.8 802.7,617.6 L811.7,624.7 C805.4,626.8 789.3,633.7 774.0,637.3 C758.7,640.9 743.8,643.7 720.0,646.3 C696.2,648.9 654.7,651.8 631.0,652.7 C607.3,653.6 593.2,652.5 578.0,651.5 C562.8,650.5 556.3,649.5 540.0,646.5 C523.7,643.5 490.3,635.7 480.4,633.5 Z" fill="url(#bb)"/>
<path d="M816.5,431 L810,560 L804.5,617.5 L812.6,623 L815,560 L819.5,433 Z" fill="#5c5664"/>
<defs><linearGradient id="sl" x1="515" y1="0" x2="589" y2="0" gradientUnits="userSpaceOnUse"><stop offset="0" stop-color="#a882d0"/><stop offset="0.15" stop-color="#b386dd"/><stop offset="1" stop-color="#b88ae4"/></linearGradient></defs>
<path d="M515.0,339.9 L588.4,331.4 L588.4,339.9 L515.5,347.8 Z" fill="url(#sl)"/>
<path d="M587.8,331.4 L587.8,340" stroke="#7a6890" stroke-width="1.2"/>
<path d="M516.3,339 L517.8,379.4" stroke="#5e5470" stroke-width="1.6"/>
<path d="M639.4,377.0 C639.7,370.8 640.4,353.0 641.0,340.0 C641.6,327.0 641.5,308.5 643.3,299.0 C645.1,289.5 648.5,287.7 652.0,283.0 C655.5,278.3 659.9,273.7 664.0,271.0 C668.1,268.3 672.1,267.0 676.8,267.0 C681.5,267.0 687.6,268.5 692.0,271.0 C696.4,273.5 700.0,277.3 703.0,282.0 C706.0,286.7 709.0,291.0 710.3,299.0 C711.6,307.0 710.9,322.0 711.0,330.0 C711.1,338.0 711.0,344.2 711.0,347.0 L702,350 L701,377 Z" fill="url(#aw)"/>
<path d="M694,316 L702,377 L689,377 Z" fill="#625a70"/>
<path d="M639.4,377 L641,330 L648,340 L652,377 Z" fill="#6e5e82" opacity="0.7"/>
<path d="M677.0,288.9 C680.3,288.6 684.2,294.0 687.0,297.0 C689.8,300.0 692.8,303.3 694.0,306.8 C695.2,310.3 695.3,315.0 694.0,318.0 C692.7,321.0 689.0,323.7 686.0,325.0 C683.0,326.3 679.7,326.7 676.0,326.0 C672.3,325.3 666.5,323.3 664.0,321.0 C661.5,318.7 660.5,315.7 661.0,312.0 C661.5,308.3 664.3,302.9 667.0,299.0 C669.7,295.1 673.7,289.2 677.0,288.9 Z" fill="#d994fa"/>
<path d="M669.8,311.5 L679.1,298.2 L685.4,313" stroke="#6e5a88" stroke-width="1.2" fill="none"/>
<path d="M660.4,327 Q675,324 690.1,326 L690.1,397 Q690,404 680,404 L670,404 Q660.4,404 660.4,397 Z" fill="#d994fa"/>
<path d="M667.5,339 L665,398" stroke="#6e5a88" stroke-width="1" stroke-dasharray="4,3" fill="none"/>
<path d="M668,334 L686,335" stroke="#b187dc" stroke-width="2" fill="none"/>
<path d="M659,396 Q660,404 672,405 L680,405 Q690,404 691,396" stroke="#a77cd0" stroke-width="2" fill="none"/>
<path d="M689.6,372 L689.6,398" stroke="#6e5a88" stroke-width="1" fill="none"/>
<path d="M520.0,404.0 C528.0,402.3 545.6,397.0 567.7,394.0 C589.8,391.0 623.0,387.1 652.7,386.1 C682.4,385.1 720.9,385.4 745.9,387.8 C770.9,390.2 793.3,398.4 802.8,400.5" stroke="#a87ad0" stroke-width="2.2" fill="none"/>
<path d="M522.8,417.2 C530.7,418.5 548.4,423.3 570.0,425.0 C591.6,426.7 623.4,427.9 652.7,427.6 C682.0,427.3 720.0,426.1 745.9,423.2 C771.8,420.3 798.0,412.3 808.4,410.1" stroke="#a87ad0" stroke-width="2.2" fill="none"/>
<path d="M507.0,481.8 C511.6,480.3 530.0,474.1 534.6,472.6" stroke="#a87ad0" stroke-width="2.2" fill="none"/>
<path d="M497.7,534.6 C509.8,536.6 544.2,543.8 570.0,546.4 C595.8,549.0 624.4,550.4 652.7,550.3 C681.0,550.2 715.4,548.2 740.0,546.0 C764.6,543.8 790.3,538.4 800.4,536.9" stroke="#a87ad0" stroke-width="2.2" fill="none"/>
<path d="M536.0,485.8 C538.2,487.8 543.5,496.7 549.2,497.6 C554.9,498.5 563.0,495.8 570.0,491.0 C577.0,486.2 583.9,471.6 591.3,469.0 C598.7,466.4 607.8,475.5 614.3,475.5 C620.8,475.5 624.9,470.9 630.0,469.0 C635.1,467.1 640.0,462.5 645.0,464.0 C650.0,465.5 654.9,473.5 660.0,478.0 C665.1,482.5 669.0,490.9 675.7,490.9 C682.4,490.9 693.0,482.1 700.0,478.0 C707.0,473.9 710.4,465.4 717.9,466.0 C725.4,466.6 737.8,480.6 744.8,481.3 C751.8,482.0 755.5,472.6 760.0,470.0 C764.5,467.4 767.8,464.4 771.6,466.0 C775.5,467.6 777.3,477.5 783.1,479.4 C788.9,481.3 802.4,477.7 806.2,477.4" stroke="#a87ad0" stroke-width="2.2" fill="none"/>
<path d="M522.8,417.2 C521.9,418.7 519.8,418.3 517.5,426.4 C515.2,434.5 510.4,459.4 509.0,466.0" stroke="#5c4e70" stroke-width="1.2" fill="none"/>
<path d="M507,481.8 L499,526.6" stroke="#5c4e70" stroke-width="1.2" fill="none"/>
<path d="M497.7,534.6 L485.3,611" stroke="#5c4e70" stroke-width="1.2" fill="none"/>
<path d="M545.2,470 L545,479" stroke="#5c4e70" stroke-width="1.2" fill="none"/>
<path d="M427.4,609.2 C429.5,599.3 435.2,572.4 440.0,550.0 C444.8,527.6 452.1,495.2 456.0,475.0 C459.9,454.8 461.3,440.2 463.2,429.0 C465.1,417.8 466.3,413.7 467.5,407.5 C468.7,401.3 469.2,395.8 470.4,391.7 C471.6,387.6 472.3,386.1 474.7,383.0 C477.1,379.9 481.1,376.0 484.7,373.0 C488.3,370.0 494.4,366.3 496.3,365.0 L496.3,365.0 C496.2,362.0 495.8,351.7 495.8,347.0 C495.9,342.3 495.9,339.8 496.6,337.0 C497.3,334.2 498.5,331.8 500.0,330.0 C501.5,328.2 503.3,326.9 505.5,326.0 C507.7,325.1 499.4,325.8 513.0,324.3 C526.6,322.8 573.2,318.0 586.9,317.0 C600.6,316.0 592.8,317.5 595.0,318.2 C597.2,318.9 598.8,319.9 600.2,321.2 C601.6,322.5 602.9,325.4 603.4,326.2" stroke="#1a72f2" stroke-width="3.2" fill="none" stroke-linejoin="round"/>
<path d="M624.0,299.0 C624.8,296.7 627.0,289.0 629.0,285.0 C631.0,281.0 631.9,279.5 635.9,275.2 C639.9,270.9 648.2,262.4 653.1,259.0 C658.0,255.6 660.7,255.5 665.0,254.5 C669.3,253.5 672.7,252.1 679.0,253.2 C685.3,254.3 697.0,258.6 702.8,261.2 C708.6,263.8 710.8,265.9 714.0,269.0 C717.2,272.1 719.8,274.9 722.2,279.5 C724.6,284.1 727.1,290.9 728.6,296.8 C730.1,302.7 730.4,307.8 731.0,315.0 C731.6,322.2 732.2,335.8 732.5,340.0 L732.9,342.1 C739.7,342.7 760.8,343.9 773.9,345.8 C787.0,347.7 801.9,350.5 811.2,353.3 C820.5,356.1 824.2,359.0 829.8,362.6 C835.4,366.2 841.0,370.2 844.7,374.7 C848.4,379.2 850.7,383.4 852.2,389.6 C853.7,395.8 853.5,404.9 853.7,412.0 C854.0,419.1 853.7,429.1 853.7,432.5" stroke="#1a72f2" stroke-width="3.2" fill="none" stroke-linejoin="round"/>
<path d="M853.6,532.0 C853.8,536.7 854.6,546.3 854.5,560.0 C854.4,573.7 853.8,597.3 853.1,614.0 C852.5,630.7 851.2,650.2 850.6,660.0 C850.0,669.8 850.3,668.2 849.7,673.0 C849.1,677.8 848.3,684.4 847.0,688.8 C845.7,693.2 844.2,696.1 841.8,699.4 C839.4,702.7 837.0,705.5 832.6,708.6 C828.2,711.7 822.0,714.9 815.4,717.8 C808.8,720.7 802.2,723.3 793.0,725.8 C783.8,728.3 770.6,730.8 760.0,733.0 C749.4,735.2 747.8,737.0 729.5,739.0 C711.2,741.0 671.4,744.2 650.0,744.8 C628.6,745.4 617.0,743.6 601.2,742.5 C585.4,741.4 568.5,739.8 555.1,737.9 C541.7,736.0 528.8,732.6 520.6,731.0 C512.4,729.4 511.6,729.8 506.0,728.5 C500.4,727.2 493.0,725.1 487.3,723.0 C481.6,720.9 476.1,719.1 471.7,716.0 C467.3,712.9 463.9,709.2 460.8,704.4 C457.7,699.6 455.6,694.2 453.0,687.2 C450.4,680.2 448.3,672.2 445.2,662.3 C442.1,652.4 437.3,636.9 434.3,628.0 C431.3,619.1 428.5,612.3 427.4,609.2" stroke="#1a72f2" stroke-width="3.2" fill="none"/>
<path d="M661,470 L647,367" stroke="#1f6fe8" stroke-width="1.7"/>
<path d="M673,482 L838,482.5 L842,484" stroke="#e01f27" stroke-width="2.2" fill="none"/>
<path d="M662,494 L645,625" stroke="#21a04a" stroke-width="1.7"/>
<path d="M634.5,339 L655.5,339 Q657,339 657,341 L657,366 Q657,368 655.5,368 L634.5,368 Q633,368 633,366 L633,341 Q633,339 634.5,339 Z" fill="#1c6fe8"/>
<rect x="652.4" y="469" width="21" height="25" rx="2" fill="#ffffff"/>
<rect x="842" y="470" width="19" height="27" rx="1" fill="#dc1e26"/>
<rect x="631.8" y="625" width="23" height="29" rx="3" fill="#22a04a"/>
</svg>
<div class="panel">
  <div class="lbl" style="left:16px;top:25px;color:#e0262f;">X</div>
  <div class="lbl" style="left:16px;top:67px;color:#1f9a4c;">Y</div>
  <div class="lbl" style="left:16.3px;top:107.5px;color:#1f6ef2;">Z</div>
  <div class="fld f" style="left:33px;top:16px;width:179px;"><span class="v">81.6909</span><span class="u">mm</span></div>
  <div class="fld" style="left:33px;top:57px;width:179px;"><span class="v">111.7385</span><span class="u">mm</span></div>
  <div class="fld" style="left:33px;top:98.5px;width:179px;"><span class="v">26</span><span class="u">mm</span></div>
  <div class="fld f" style="left:220px;top:16px;width:179px;"><span class="v">100</span><span class="u">%</span></div>
  <div class="fld" style="left:220px;top:57px;width:179px;"><span class="v">100</span><span class="u">%</span></div>
  <div class="fld" style="left:220px;top:98.5px;width:179px;"><span class="v">100</span><span class="u">%</span></div>
  <div class="cb" style="top:151.6px;"></div>
  <div class="cbt" style="top:154px;letter-spacing:-0.2px;">Snap Scaling</div>
  <div class="cb" style="top:187.9px;"><svg width="18" height="18" style="position:absolute;left:0;top:0"><path d="M6,10 L8.3,12.3 L12.5,7.5" stroke="#1a1a1a" stroke-width="2.2" fill="none"/></svg></div>
  <div class="cbt" style="top:190px;">Uniform Scaling</div>
  
</div>
<svg style="position:absolute;left:0;top:263px" width="18" height="34"><path d="M16.5,4 L3.3,17.2 L16.5,30.2" fill="#fff" stroke="#c4c4c4" stroke-width="1"/><rect x="16.6" y="3" width="2" height="28" fill="#fff"/></svg>
<div style="position:absolute;left:0;top:0;width:91px;height:97px;background:#fff;"></div>
<svg style="position:absolute;left:0;top:0" width="91" height="97" viewBox="0 0 91 97">
  <path d="M13,0 L52,0 L52,22 Q52,30 60,30 L82,30 L82,86 Q82,93 75,93 L14,93 Q7,93 7,86 L7,6 Q7,0 13,0 Z" fill="#3d47c9"/>
  <path d="M56.5,1.5 L80.5,26 L62,26 Q56.5,26 56.5,20 Z" fill="#3d47c9"/>
  <rect x="-6" y="10" width="46.5" height="32" rx="6" fill="#fff"/>
  <rect x="-4" y="14" width="40.5" height="24" rx="3" fill="#3d47c9"/>
  <text x="1.5" y="31" font-family="Liberation Sans" font-weight="bold" font-size="13" fill="#fff">STL</text>
  <rect x="20" y="47" width="49" height="4.5" fill="#fff"/>
  <rect x="20" y="61.8" width="49" height="4.3" fill="#fff"/>
  <rect x="20" y="76" width="49" height="4.5" fill="#fff"/>
</svg>
<svg style="position:absolute;left:16px;top:686px" width="16" height="12"><path d="M2.5,9.5 L8,4 L13.5,9.5" stroke="#777" stroke-width="1.6" fill="none"/></svg>
<div class="txt" style="left:49.5px;top:686px;font-size:14px;letter-spacing:0.25px;color:#686868;">Object list</div>
<svg style="position:absolute;left:17px;top:720px" width="22" height="22"><path d="M5,15 L14,5 L17,8 L8,17.5 L4.5,18 Z" fill="#666"/><rect x="2" y="18" width="16" height="1.8" fill="#666"/></svg>
<div class="txt" style="left:57px;top:723px;font-size:13px;color:#666;">STL1465</div>
<div class="txt" style="left:16px;top:757px;font-size:14px;letter-spacing:0.17px;color:#666;">81.7 x 111.7 x 26.0 mm</div>
<svg style="position:absolute;left:0;top:0" width="912" height="834" viewBox="0 0 912 834">
  <g stroke="#0d0d3a" stroke-width="2.6" fill="none" stroke-linecap="round" stroke-linejoin="round">
    <path d="M71.9,431.4 A9.8,9.8 0 1 0 81.6,421.2 L73.5,421.2"/>
    <path d="M77.8,416.2 L72.8,421.2 L77.8,426.2"/>
  </g>
  <g stroke="#666" stroke-width="2.6" fill="none" stroke-linejoin="round" stroke-linecap="round">
    <path d="M32.7,795 L43.6,801 L43.6,813.5 L32.7,819.5 L21.8,813.5 L21.8,801 Z M21.8,801 L32.7,807 L43.6,801 M32.7,807 L32.7,819.5"/>
  </g>
  <path d="M61.6,801.6 L77.5,801.6 L77.5,817.5 L61.6,817.5 Z" fill="#666" stroke="#666" stroke-width="2.6" stroke-linejoin="round"/><path d="M61.6,801.6 L77.5,801.6 L77.5,817.5 L61.6,817.5 Z M61.6,801.6 L67.4,795.8 L83.3,795.8 L77.5,801.6 Z M77.5,801.6 L83.3,795.8 L83.3,811.7 L77.5,817.5 Z" fill="none" stroke="#666" stroke-width="2.6" stroke-linejoin="round"/><path d="M101.9,801.6 L107.7,795.8 L123.6,795.8 L117.8,801.6 Z" fill="#666" stroke="#666" stroke-width="2.6" stroke-linejoin="round"/><path d="M101.9,801.6 L117.8,801.6 L117.8,817.5 L101.9,817.5 Z M101.9,801.6 L107.7,795.8 L123.6,795.8 L117.8,801.6 Z M117.8,801.6 L123.6,795.8 L123.6,811.7 L117.8,817.5 Z" fill="none" stroke="#666" stroke-width="2.6" stroke-linejoin="round"/><path d="M147.4,801.6 L141.6,795.8 L141.6,811.7 L147.4,817.5 Z" fill="#666" stroke="#666" stroke-width="2.6" stroke-linejoin="round"/><path d="M147.4,801.6 L163.3,801.6 L163.3,817.5 L147.4,817.5 Z M147.4,801.6 L141.6,795.8 L157.5,795.8 L163.3,801.6 Z M147.4,801.6 L141.6,795.8 L141.6,811.7 L147.4,817.5 Z" fill="none" stroke="#666" stroke-width="2.6" stroke-linejoin="round"/><path d="M197.8,801.6 L203.6,795.8 L203.6,811.7 L197.8,817.5 Z" fill="#666" stroke="#666" stroke-width="2.6" stroke-linejoin="round"/><path d="M181.9,801.6 L197.8,801.6 L197.8,817.5 L181.9,817.5 Z M181.9,801.6 L187.7,795.8 L203.6,795.8 L197.8,801.6 Z M197.8,801.6 L203.6,795.8 L203.6,811.7 L197.8,817.5 Z" fill="none" stroke="#666" stroke-width="2.6" stroke-linejoin="round"/>
</svg>
</body></html>
